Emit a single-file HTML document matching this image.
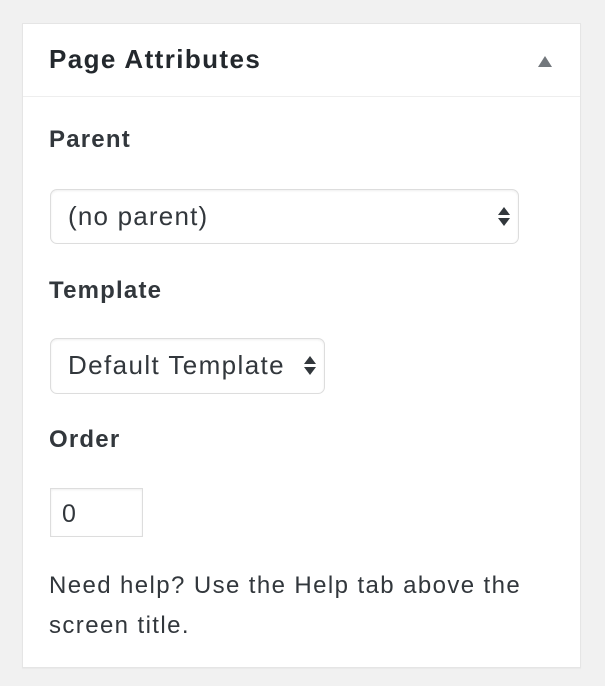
<!DOCTYPE html>
<html><head><style>
body{margin:0;background:#f1f1f1;width:605px;height:686px;position:relative;font-family:"Liberation Sans",Arial,sans-serif;color:#23282d;overflow:hidden}
.panel{position:absolute;left:22px;top:23px;width:557px;height:643px;background:#fff;border:1px solid #e5e5e5;box-shadow:0 1px 1px rgba(0,0,0,.04)}
.hdr{position:absolute;left:0;top:0;width:557px;height:72px;border-bottom:1px solid #eee}
.t{position:absolute;font-weight:bold;white-space:nowrap}
.sel{position:absolute;border:1px solid #ddd;border-radius:7px;background:#fff;box-shadow:inset 0 1px 2px rgba(0,0,0,.07);font-size:26px;color:#32373c;letter-spacing:1.2px}
.sel span{position:absolute;left:17px;top:11px;white-space:nowrap}
.arr{position:absolute;width:0;height:0;border-left:6px solid transparent;border-right:6px solid transparent}
</style></head><body>
<div class="panel">
 <div class="hdr">
  <div class="t" style="left:26px;top:20px;font-size:26px;letter-spacing:1.4px">Page Attributes</div>
  <div class="arr" style="left:515px;top:32px;border-bottom:11px solid #72777c;border-left-width:7px;border-right-width:7px"></div>
 </div>
 <div class="t" style="left:26px;top:102px;font-size:24px;letter-spacing:1.2px;color:#32373c">Parent</div>
 <div class="sel" style="left:27px;top:165px;width:467px;height:53px"><span>(no parent)</span>
  <div class="arr" style="left:447px;top:17px;border-bottom:8px solid #32373c"></div>
  <div class="arr" style="left:447px;top:28px;border-top:8px solid #32373c"></div>
 </div>
 <div class="t" style="left:26px;top:253px;font-size:24px;letter-spacing:1.2px;color:#32373c">Template</div>
 <div class="sel" style="left:27px;top:314px;width:273px;height:54px"><span style="letter-spacing:1.4px">Default Template</span>
  <div class="arr" style="left:253px;top:17px;border-bottom:8px solid #32373c"></div>
  <div class="arr" style="left:253px;top:28px;border-top:8px solid #32373c"></div>
 </div>
 <div class="t" style="left:26px;top:402px;font-size:24px;letter-spacing:1.2px;color:#32373c">Order</div>
 <div style="position:absolute;left:27px;top:464px;width:91px;height:47px;border:1px solid #ddd;box-shadow:inset 0 1px 2px rgba(0,0,0,.07);font-size:25px;color:#32373c"><span style="position:absolute;left:11px;top:11px">0</span></div>
 <div style="position:absolute;left:26px;top:542px;width:520px;font-size:24px;letter-spacing:1.4px;line-height:40px;color:#32373c;white-space:nowrap">Need help? Use the Help tab above the<br>screen title.</div>
</div>
</body></html>
